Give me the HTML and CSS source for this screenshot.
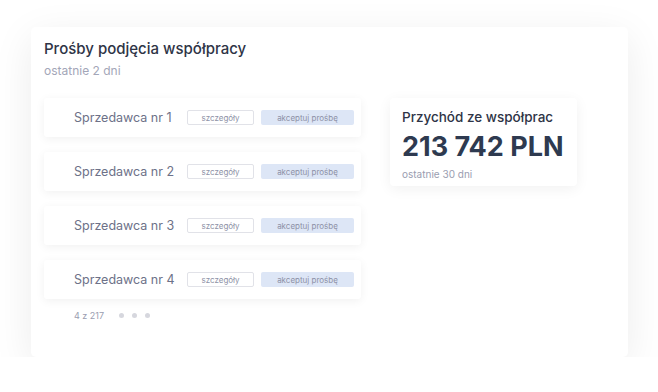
FILE: index.html
```html
<!DOCTYPE html>
<html lang="pl">
<head>
    <meta charset="UTF-8">
    <meta name="viewport" content="width=device-width, initial-scale=1.0">
    <title>Prośby podjęcia współpracy</title>
    <link rel="stylesheet" href="styles.css">
</head>
<body>
  <div class="panel">
    <div class="panel_head">
      <h1>Prośby podjęcia współpracy</h1>
      <p>ostatnie 2 dni</p>
    </div>
    <div class="panel_body">
      <div class="requests">
        <div class="request">
          <span class="seller">Sprzedawca nr 1</span>
          <a href="" class="btn_details">szczegóły</a>
          <a href="" class="btn_accept">akceptuj prośbę</a>
        </div>
        <div class="request">
          <span class="seller">Sprzedawca nr 2</span>
          <a href="" class="btn_details">szczegóły</a>
          <a href="" class="btn_accept">akceptuj prośbę</a>
        </div>
        <div class="request">
          <span class="seller">Sprzedawca nr 3</span>
          <a href="" class="btn_details">szczegóły</a>
          <a href="" class="btn_accept">akceptuj prośbę</a>
        </div>
        <div class="request">
          <span class="seller">Sprzedawca nr 4</span>
          <a href="" class="btn_details">szczegóły</a>
          <a href="" class="btn_accept">akceptuj prośbę</a>
        </div>
        <div class="pager">
          <span>4 z 217</span>
          <div class="dots">
            <i></i><i></i><i></i>
          </div>
        </div>
      </div>
      <div class="income">
        <h2>Przychód ze współprac</h2>
        <div class="amount">213 742 PLN</div>
        <p>ostatnie 30 dni</p>
      </div>
    </div>
  </div>
</body>
</html>
```

FILE: styles.css
```css
* {
    margin: 0;
    padding: 0;
    box-sizing: border-box;
}
body {
    background-color: #fff;
    font-family: Inter, "Open Sans", sans-serif;
}
.panel {
    margin: 27px 0 0 31px;
    width: 597px;
    height: 330px;
    background-color: #fff;
    border-radius: 5px;
    box-shadow: 0 10px 40px rgba(0, 0, 0, 0.08);
    padding: 13px 13px 0 13px;
}
.panel_head h1 {
    font-size: 15px;
    font-weight: 500;
    color: #2e3446;
    line-height: 18px;
}
.panel_head p {
    margin-top: 5px;
    font-size: 12px;
    color: #a3a6b8;
    line-height: 15px;
}
.panel_body {
    display: flex;
    margin-top: 20px;
}
.requests {
    width: 317px;
    display: flex;
    flex-direction: column;
    gap: 15px;
}
.request {
    height: 39px;
    display: flex;
    align-items: center;
    padding-left: 30px;
    background-color: #fff;
    border-radius: 3px;
    box-shadow: 0 2px 10px rgba(0, 0, 0, 0.06);
}
.seller {
    width: 113px;
    font-size: 12.5px;
    color: #6d7188;
}
.request a {
    height: 15px;
    display: flex;
    align-items: center;
    justify-content: center;
    font-size: 8px;
    text-decoration: none;
    color: #8d91a6;
    border-radius: 2px;
}
.btn_details {
    width: 67px;
    border: 1px solid #e1e2e8;
}
.btn_accept {
    width: 93px;
    margin-left: 7px;
    background-color: #dde6f6;
}
.pager {
    display: flex;
    align-items: center;
    padding-left: 30px;
    margin-top: -4px;
    font-size: 9px;
    color: #9a9db0;
}
.dots {
    display: flex;
    gap: 8px;
    margin-left: 15px;
}
.dots i {
    width: 5px;
    height: 5px;
    border-radius: 50%;
    background-color: #d6d7de;
}
.income {
    margin-left: 29px;
    width: 187px;
    height: 88px;
    padding: 11px 12px;
    background-color: #fff;
    border-radius: 4px;
    box-shadow: 0 3px 14px rgba(0, 0, 0, 0.06);
}
.income h2 {
    font-size: 13.5px;
    font-weight: 500;
    color: #2e3446;
    line-height: 16px;
}
.income .amount {
    font-size: 27px;
    font-weight: 700;
    color: #2e3a50;
    line-height: 34px;
    margin-top: 5px;
    white-space: nowrap;
}
.income p {
    font-size: 10px;
    color: #9a9db0;
    margin-top: 4px;
}
```
